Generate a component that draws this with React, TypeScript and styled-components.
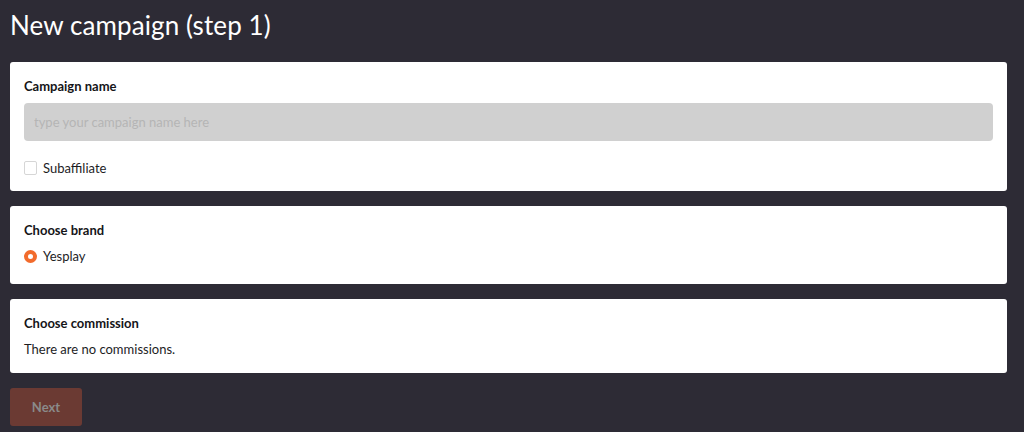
import React, { useState } from 'react';
import styled, { createGlobalStyle } from 'styled-components';

const GlobalStyle = createGlobalStyle`
  html, body {
    margin: 0;
    padding: 0;
    background-color: #2d2b35;
  }

  body {
    font-family: Lato, 'Noto Sans', sans-serif;
    color: #1d1d1f;
  }

  * {
    box-sizing: border-box;
  }
`;

function App() {
  const [name, setName] = useState('');
  const [subaffiliate, setSubaffiliate] = useState(false);

  return (
    <Page>
      <GlobalStyle />
      <Title>New campaign (step 1)</Title>

      <Card>
        <CardTitle>Campaign name</CardTitle>
        <TextInput
          value={name}
          placeholder="type your campaign name here"
          onChange={(e) => setName(e.target.value)}
        />
        <OptionRow>
          <CheckBox
            type="checkbox"
            checked={subaffiliate}
            onChange={(e) => setSubaffiliate(e.target.checked)}
          />
          <span>Subaffiliate</span>
        </OptionRow>
      </Card>

      <Card>
        <CardTitle>Choose brand</CardTitle>
        <OptionRow $spaced>
          <RadioDot $selected />
          <span>Yesplay</span>
        </OptionRow>
      </Card>

      <Card>
        <CardTitle>Choose commission</CardTitle>
        <Text>There are no commissions.</Text>
      </Card>

      <NextButton disabled>Next</NextButton>
    </Page>
  );
}

const Page = styled.div`
  display: flex;
  flex-direction: column;
  align-items: flex-start;
  gap: 15px;
  padding: 8px 17px 20px 10px;
  min-height: 432px;
`;

const Title = styled.h1`
  margin: 0 0 5px;
  font-size: 26px;
  line-height: 34px;
  font-weight: 400;
  color: #ffffff;
  letter-spacing: 0.1px;
`;

const Card = styled.section`
  align-self: stretch;
  display: flex;
  flex-direction: column;
  gap: 10px;
  padding: 16px 14px 15px;
  background-color: #ffffff;
  border-radius: 3px;
`;

const CardTitle = styled.h2`
  margin: 0;
  font-size: 13px;
  line-height: 16px;
  font-weight: 700;
  color: #151518;
`;

const TextInput = styled.input`
  height: 38px;
  margin: -1px 0 9px;
  padding: 0 10px;
  border: none;
  border-radius: 4px;
  background-color: #d0d0d0;
  font-family: inherit;
  font-size: 13px;
  color: #333;
  outline: none;

  &::placeholder {
    color: #b5b5b5;
  }
`;

const OptionRow = styled.label<{ $spaced?: boolean }>`
  display: flex;
  align-items: center;
  gap: 6px;
  margin-bottom: ${({ $spaced }) => ($spaced ? '5px' : '0')};
  font-size: 13px;
  line-height: 16px;
  color: #1d1d1f;
`;

const CheckBox = styled.input`
  appearance: none;
  margin: 0;
  width: 13px;
  height: 14px;
  border: 1px solid #d6d6d6;
  border-radius: 2px;
  background-color: #fff;
`;

const RadioDot = styled.span<{ $selected?: boolean }>`
  width: 13px;
  height: 13px;
  border-radius: 50%;
  background-color: #fff;
  border: ${({ $selected }) => ($selected ? '4px solid #f26b2c' : '1px solid #d6d6d6')};
`;

const Text = styled.p`
  margin: 0;
  font-size: 13px;
  line-height: 17px;
  color: #1d1d1f;
`;

const NextButton = styled.button`
  width: 72px;
  height: 38px;
  border: none;
  border-radius: 3px;
  background-color: #6b3a33;
  color: #8a8a8a;
  font-family: inherit;
  font-size: 13px;
  font-weight: 700;
`;

export default App;
